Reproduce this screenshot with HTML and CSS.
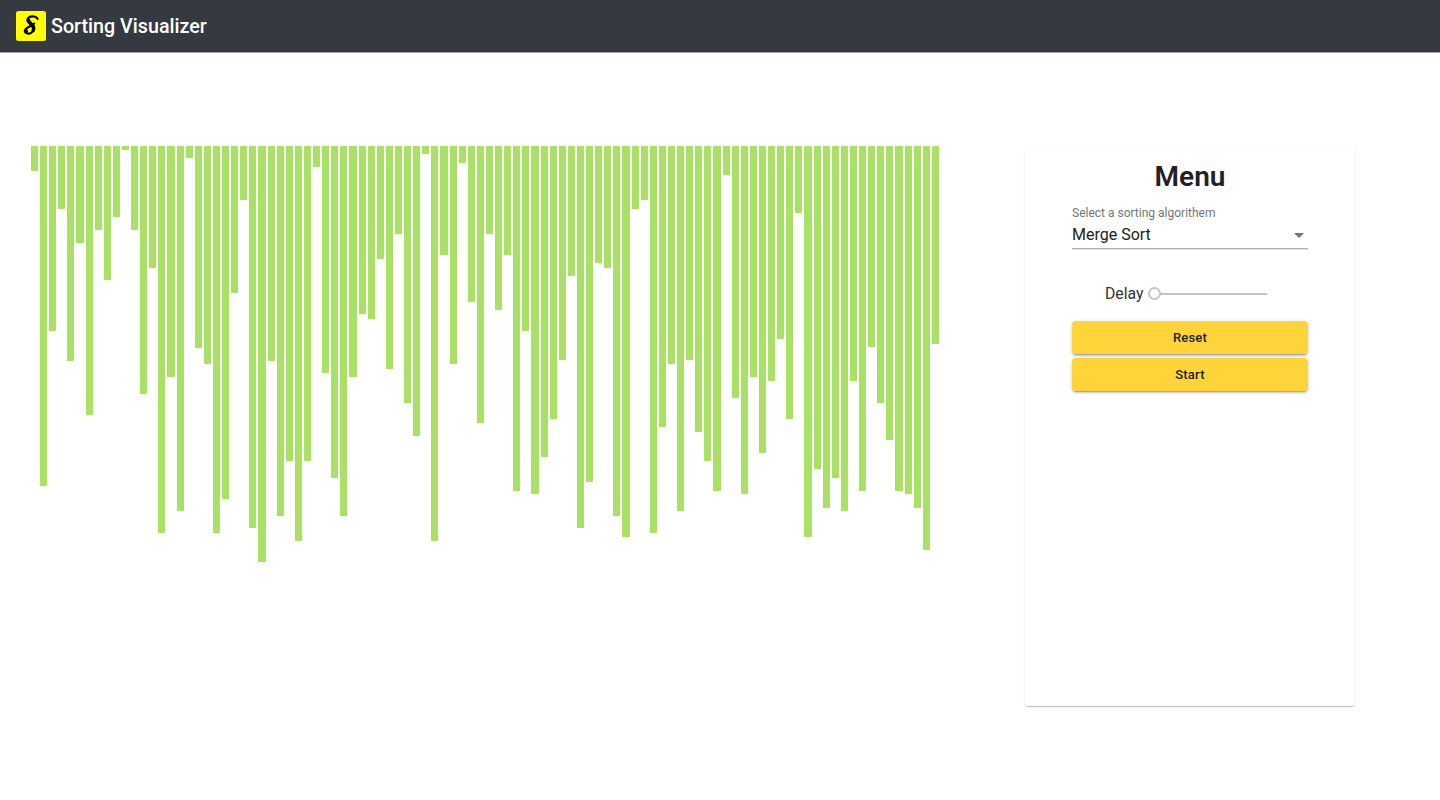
FILE: index.html
```html
<!DOCTYPE html>
<html lang="en">
<head>
<meta charset="utf-8">
<title>Sorting Visualizer</title>
<link rel="stylesheet" href="styles.css">
</head>
<body>
<header class="navbar">
  <svg class="logo" viewBox="0 0 30 30" aria-hidden="true">
    <rect width="30" height="30" rx="2.5" fill="#ffff00"/>
    <path d="M21.600 7.800C20.400 5.400 15.600 4.600 13 6.400c-2.200 1.600-1.800 4 .2 5.900l2.600 2.500c2.400 2.400 2 5.700-.6 7.100-2.400 1.200-5.400.8-6.200-1-.7-1.600 1-3.300 3.200-4.600 2-1.200 4-2.200 6-3.600" fill="none" stroke="#000" stroke-width="2.200" stroke-linecap="round"/>
    <path d="M12.200 8.600c.2 2.200 2.400 3.700 4 5.400 1.600 1.800 2 3.600 1 5.600" fill="none" stroke="#000" stroke-width="3.400" stroke-linecap="round"/>
    <circle cx="10.200" cy="20.300" r="1.700" fill="#000"/>
  </svg>
  <span class="brand">Sorting Visualizer</span>
</header>
<main class="content">
  <section class="bars">
    <div class="bar-group"><div class="bar" style="height:25px"></div><div class="bar" style="height:340px"></div><div class="bar" style="height:185px"></div><div class="bar" style="height:63px"></div><div class="bar" style="height:215px"></div><div class="bar" style="height:97px"></div><div class="bar" style="height:269px"></div><div class="bar" style="height:84px"></div><div class="bar" style="height:134px"></div><div class="bar" style="height:71px"></div></div>
    <div class="bar-group"><div class="bar" style="height:4px"></div><div class="bar" style="height:84px"></div><div class="bar" style="height:248px"></div><div class="bar" style="height:122px"></div><div class="bar" style="height:387px"></div><div class="bar" style="height:231px"></div><div class="bar" style="height:365px"></div><div class="bar" style="height:12px"></div><div class="bar" style="height:202px"></div><div class="bar" style="height:218px"></div></div>
    <div class="bar-group"><div class="bar" style="height:387px"></div><div class="bar" style="height:353px"></div><div class="bar" style="height:147px"></div><div class="bar" style="height:54px"></div><div class="bar" style="height:382px"></div><div class="bar" style="height:416px"></div><div class="bar" style="height:215px"></div><div class="bar" style="height:370px"></div><div class="bar" style="height:315px"></div><div class="bar" style="height:395px"></div></div>
    <div class="bar-group"><div class="bar" style="height:315px"></div><div class="bar" style="height:21px"></div><div class="bar" style="height:227px"></div><div class="bar" style="height:332px"></div><div class="bar" style="height:370px"></div><div class="bar" style="height:231px"></div><div class="bar" style="height:168px"></div><div class="bar" style="height:173px"></div><div class="bar" style="height:113px"></div><div class="bar" style="height:223px"></div></div>
    <div class="bar-group"><div class="bar" style="height:88px"></div><div class="bar" style="height:257px"></div><div class="bar" style="height:290px"></div><div class="bar" style="height:8px"></div><div class="bar" style="height:395px"></div><div class="bar" style="height:109px"></div><div class="bar" style="height:218px"></div><div class="bar" style="height:17px"></div><div class="bar" style="height:156px"></div><div class="bar" style="height:277px"></div></div>
    <div class="bar-group"><div class="bar" style="height:88px"></div><div class="bar" style="height:164px"></div><div class="bar" style="height:109px"></div><div class="bar" style="height:345px"></div><div class="bar" style="height:185px"></div><div class="bar" style="height:348px"></div><div class="bar" style="height:311px"></div><div class="bar" style="height:273px"></div><div class="bar" style="height:214px"></div><div class="bar" style="height:130px"></div></div>
    <div class="bar-group"><div class="bar" style="height:382px"></div><div class="bar" style="height:336px"></div><div class="bar" style="height:117px"></div><div class="bar" style="height:122px"></div><div class="bar" style="height:370px"></div><div class="bar" style="height:391px"></div><div class="bar" style="height:63px"></div><div class="bar" style="height:54px"></div><div class="bar" style="height:387px"></div><div class="bar" style="height:281px"></div></div>
    <div class="bar-group"><div class="bar" style="height:218px"></div><div class="bar" style="height:365px"></div><div class="bar" style="height:214px"></div><div class="bar" style="height:286px"></div><div class="bar" style="height:315px"></div><div class="bar" style="height:345px"></div><div class="bar" style="height:29px"></div><div class="bar" style="height:252px"></div><div class="bar" style="height:348px"></div><div class="bar" style="height:231px"></div></div>
    <div class="bar-group"><div class="bar" style="height:307px"></div><div class="bar" style="height:235px"></div><div class="bar" style="height:193px"></div><div class="bar" style="height:273px"></div><div class="bar" style="height:67px"></div><div class="bar" style="height:391px"></div><div class="bar" style="height:323px"></div><div class="bar" style="height:362px"></div><div class="bar" style="height:332px"></div><div class="bar" style="height:365px"></div></div>
    <div class="bar-group"><div class="bar" style="height:235px"></div><div class="bar" style="height:345px"></div><div class="bar" style="height:201px"></div><div class="bar" style="height:257px"></div><div class="bar" style="height:294px"></div><div class="bar" style="height:345px"></div><div class="bar" style="height:348px"></div><div class="bar" style="height:362px"></div><div class="bar" style="height:404px"></div><div class="bar" style="height:198px"></div></div>
  </section>
  <aside class="menu">
    <h1 class="menu-title">Menu</h1>
    <div class="field">
      <span class="field-label">Select a sorting algorithem</span>
      <div class="select">
        <span class="select-value">Merge Sort</span>
        <span class="select-arrow"></span>
      </div>
    </div>
    <div class="delay">
      <span class="delay-label">Delay</span>
      <div class="slider"><span class="slider-thumb"></span></div>
    </div>
    <div class="actions">
      <button class="btn" type="button">Reset</button>
      <button class="btn" type="button">Start</button>
    </div>
  </aside>
</main>
</body>
</html>
```

FILE: styles.css
```css
* { box-sizing: border-box; }
html, body { margin: 0; height: 100%; }
body {
  background: #fff;
  font-family: Roboto, "Liberation Sans", sans-serif;
  color: #212121;
  overflow: hidden;
}
.navbar {
  height: 53px;
  background: #343a40;
  border-bottom: 1px solid #a3a5a8;
  display: flex;
  align-items: center;
  gap: 5px;
  padding: 0 0 1px 16px;
}
.logo { width: 30px; height: 30px; flex: none; }
.brand {
  color: #fff;
  font-size: 19.7px;
  font-weight: 500;
  line-height: 28px;
  padding-top: 2px;
}
.content {
  display: flex;
  align-items: flex-start;
  padding: 93px 85px 0 30.95px;
}
.bars {
  display: flex;
  align-items: flex-start;
  gap: 2px;
  flex: none;
  width: 908px;
}
.bar-group {
  display: flex;
  align-items: flex-start;
  gap: 2px;
  flex: 1 1 0;
}
.bar {
  flex: 1 1 0;
  background: #a9e166;
}
.menu {
  margin-left: auto;
  margin-top: 1px;
  width: 330px;
  height: 559px;
  background: #fff;
  border-radius: 4px;
  box-shadow: 0 2px 1px -1px rgba(0,0,0,.14), 0 1px 1px 0 rgba(0,0,0,.06), 0 1px 3px 0 rgba(0,0,0,.1);
  padding: 14px 47px 0;
  display: flex;
  flex-direction: column;
}
.menu-title {
  margin: 0;
  font-size: 28px;
  font-weight: 600;
  line-height: 32px;
  text-align: center;
}
.field { margin-top: 13px; }
.field-label {
  display: block;
  font-size: 12px;
  line-height: 14px;
  color: #757575;
}
.select {
  display: flex;
  align-items: center;
  justify-content: space-between;
  height: 29px;
  padding: 2px 3px 0 0;
  border-bottom: 1px solid #b0b0b0;
  box-shadow: 0 1px 0 #e0e0e0;
}
.select-value { font-size: 16px; line-height: 24px; }
.select-arrow {
  width: 0;
  height: 0;
  border-left: 5px solid transparent;
  border-right: 5px solid transparent;
  border-top: 5px solid #757575;
  margin-right: 1px;
}
.delay {
  display: flex;
  align-items: center;
  margin-top: 31px;
  padding-left: 33px;
  height: 28px;
}
.delay-label { font-size: 15.8px; line-height: 24px; color: #333; }
.slider {
  position: relative;
  width: 113px;
  height: 2px;
  margin-left: 10px;
  background: #c4c4c4;
}
.slider-thumb {
  position: absolute;
  left: -6px;
  top: -6px;
  width: 13px;
  height: 13px;
  border-radius: 50%;
  background: #fff;
  border: 2px solid #c4c4c4;
}
.actions {
  display: flex;
  flex-direction: column;
  gap: 4px;
  margin-top: 13px;
}
.btn {
  height: 33px;
  border: 0;
  border-radius: 4px;
  background: #ffd43b;
  color: #212121;
  font-family: inherit;
  font-size: 13px;
  font-weight: 500;
  letter-spacing: .2px;
  box-shadow: 0 3px 1px -2px rgba(0,0,0,.2), 0 2px 2px 0 rgba(0,0,0,.14), 0 1px 5px 0 rgba(0,0,0,.12);
}
```
